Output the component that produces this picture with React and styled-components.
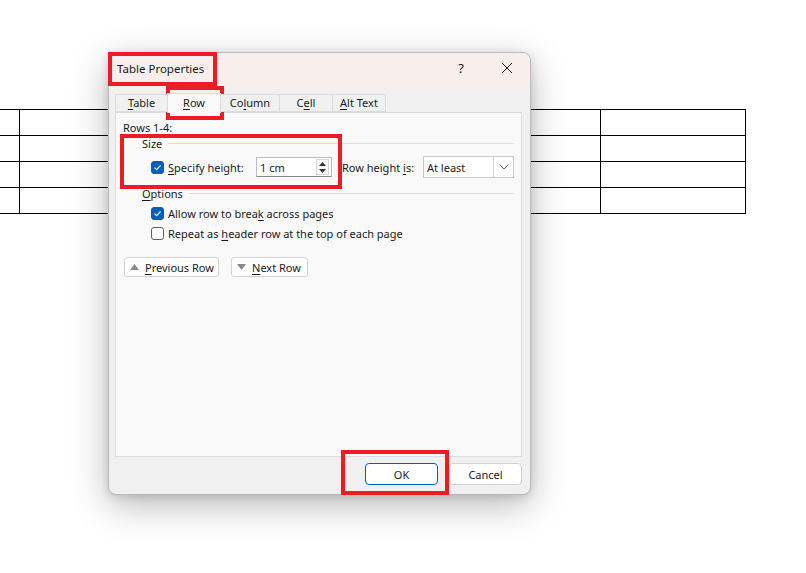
import React from 'react'
import styled, { createGlobalStyle } from 'styled-components'

const GlobalStyle = createGlobalStyle`
  html, body {
    margin: 0;
    padding: 0;
    background: #ffffff;
    overflow: hidden;
  }
  body {
    font-family: "Noto Sans", "Segoe UI", sans-serif;
    font-size: 11px;
    color: #1a1a1a;
  }
`

const Page = styled.div`
  position: relative;
  width: 806px;
  height: 573px;
  overflow: hidden;
  padding-top: 109px;
  box-sizing: border-box;
`

const DocTable = styled.table`
  border-collapse: collapse;
  margin-left: -10px;
  width: 752px;
  table-layout: fixed;
`

const DocCell = styled.td`
  border: 1px solid #000;
  height: 25px;
  padding: 0;
  width: ${p => p.$w}px;
`

const Dialog = styled.div`
  position: absolute;
  left: 108px;
  top: 52px;
  width: 423px;
  height: 443px;
  background: #f0f0f0;
  border: 1px solid #b9b9b9;
  border-radius: 8px;
  box-sizing: border-box;
  box-shadow: 0 10px 36px rgba(0, 0, 0, 0.28), 0 2px 8px rgba(0, 0, 0, 0.12);
  display: flex;
  flex-direction: column;
  overflow: hidden;
  white-space: nowrap;
`

const TitleBar = styled.div`
  height: 34px;
  box-sizing: border-box;
  padding-bottom: 4px;
  background: #f8efec;
  display: flex;
  align-items: center;
  padding-left: 8px;
  flex-shrink: 0;
`

const Title = styled.div`
  flex: 1;
  font-size: 11.5px;
  color: #1a1a1a;
`

const TitleButton = styled.div`
  width: 46px;
  height: 30px;
  display: flex;
  align-items: center;
  justify-content: center;
  font-size: 13px;
  color: #1a1a1a;
`

const Body = styled.div`
  flex: 1;
  display: flex;
  flex-direction: column;
  padding: 6px 8px 0 6px;
`

const TabStrip = styled.div`
  display: flex;
  align-items: flex-end;
  height: 19px;
  position: relative;
  z-index: 1;
`

const Tab = styled.div`
  width: ${p => p.$w}px;
  height: ${p => (p.$active ? 20 : 18)}px;
  box-sizing: border-box;
  display: flex;
  align-items: center;
  justify-content: center;
  padding-bottom: ${p => (p.$active ? '2px' : '1px')};
  border: 1px solid #dcdcdc;
  border-bottom: ${p => (p.$active ? 'none' : '1px solid #dcdcdc')};
  margin-left: -1px;
  background: ${p => (p.$active ? '#f9f9f9' : '#f0f0f0')};
  margin-bottom: ${p => (p.$active ? '-1px' : '0')};
  &:first-child {
    margin-left: 0;
  }
`

const Panel = styled.div`
  height: 345px;
  background: #f9f9f9;
  border: 1px solid #dcdcdc;
  box-sizing: border-box;
  padding: 7px 7px 0 7px;
  display: flex;
  flex-direction: column;
`

const Label = styled.div`
  height: 16px;
  line-height: 16px;
`

const GroupHeader = styled.div`
  display: flex;
  align-items: center;
  height: 16px;
  margin-top: ${p => p.$mt}px;
  margin-left: 19px;
  gap: 6px;
  &::after {
    content: '';
    flex: 1;
    height: 1px;
    background: #dddddd;
  }
`

const FieldRow = styled.div`
  display: flex;
  align-items: center;
  height: ${p => p.$h || 20}px;
  margin-top: ${p => p.$mt || 0}px;
  margin-left: 28px;
`

const Check = styled.span`
  width: 13px;
  height: 13px;
  box-sizing: border-box;
  border-radius: 3px;
  display: inline-flex;
  align-items: center;
  justify-content: center;
  background: ${p => (p.$on ? '#005fb8' : '#ffffff')};
  border: 1px solid ${p => (p.$on ? '#005fb8' : '#5f5f5f')};
  margin-right: 4px;
  flex-shrink: 0;
`

const Key = styled.u`
  text-decoration: underline;
  text-underline-offset: 2px;
`

const FieldText = styled.span`
  width: ${p => p.$w}px;
  flex-shrink: 0;
`

const SpinBox = styled.div`
  width: 76px;
  height: 20px;
  box-sizing: border-box;
  background: #ffffff;
  border: 1px solid #bdbdbd;
  border-bottom-color: #8a8a8a;
  display: flex;
  align-items: center;
  flex-shrink: 0;
`

const SpinText = styled.div`
  flex: 1;
  padding-left: 3px;
`

const SpinButtons = styled.div`
  width: 13px;
  height: 16px;
  margin-right: 2px;
  border: 1px solid #d4d4d4;
  box-sizing: border-box;
  display: flex;
  flex-direction: column;
  align-items: center;
  justify-content: space-around;
  background: #fbfbfb;
`

const SideLabel = styled.div`
  margin-left: 10px;
  width: 73px;
`

const Select = styled.div`
  width: 91px;
  height: 22px;
  box-sizing: border-box;
  margin-left: auto;
  border: 1px solid #c8c8c8;
  background: #ffffff;
  display: flex;
  align-items: center;
`

const SelectText = styled.div`
  flex: 1;
  padding-left: 3px;
`

const SelectArrow = styled.div`
  width: 19px;
  height: 20px;
  border-left: 1px solid #d4d4d4;
  display: flex;
  align-items: center;
  justify-content: center;
`

const NavRow = styled.div`
  display: flex;
  gap: 12px;
  margin-top: 14px;
  margin-left: 1px;
`

const NavButton = styled.div`
  width: ${p => p.$w}px;
  height: 20px;
  box-sizing: border-box;
  background: #ffffff;
  border: 1px solid #d3d3d3;
  border-radius: 3px;
  display: flex;
  align-items: center;
  padding-left: 5px;
  gap: 6px;
`

const Footer = styled.div`
  display: flex;
  justify-content: flex-end;
  gap: 11px;
  margin-top: 6px;
`

const Button = styled.div`
  width: 73px;
  height: 22px;
  box-sizing: border-box;
  background: #ffffff;
  border: 1px solid ${p => (p.$primary ? '#005fb8' : '#d0d0d0')};
  border-radius: 4px;
  display: flex;
  align-items: center;
  justify-content: center;
`

const Marker = styled.div`
  position: absolute;
  left: ${p => p.$x}px;
  top: ${p => p.$y}px;
  width: ${p => p.$w}px;
  height: ${p => p.$h}px;
  border: 4px solid #ec1c24;
  box-sizing: border-box;
  pointer-events: none;
`

const CheckMark = () => (
  <svg width="9" height="9" viewBox="0 0 9 9">
    <path d="M1.5 4.6 L3.6 6.6 L7.6 2.4" fill="none" stroke="#fff" strokeWidth="1.2" />
  </svg>
)

const Triangle = ({ down }) => (
  <svg width="9" height="6" viewBox="0 0 9 6">
    <path d={down ? 'M0 0 H9 L4.5 6 Z' : 'M0 6 H9 L4.5 0 Z'} fill="#8a8a8a" />
  </svg>
)

const CheckBox = ({ on }) => <Check $on={on}>{on && <CheckMark />}</Check>

const App = () => {
  const rows = [0, 1, 2, 3]
  return (
    <Page>
      <GlobalStyle />
      <DocTable>
        <tbody>
          {rows.map(r => (
            <tr key={r}>
              <DocCell $w={28} />
              <DocCell $w={580} />
              <DocCell $w={144} />
            </tr>
          ))}
        </tbody>
      </DocTable>

      <Dialog>
        <TitleBar>
          <Title>Table Properties</Title>
          <TitleButton>?</TitleButton>
          <TitleButton>
            <svg width="12" height="12" viewBox="0 0 12 12">
              <path d="M1 1 L11 11 M11 1 L1 11" stroke="#1a1a1a" strokeWidth="1" />
            </svg>
          </TitleButton>
        </TitleBar>
        <Body>
          <TabStrip>
            <Tab $w={53}><span><Key>T</Key>able</span></Tab>
            <Tab $w={54} $active><span><Key>R</Key>ow</span></Tab>
            <Tab $w={60}><span>Co<Key>l</Key>umn</span></Tab>
            <Tab $w={54}><span>C<Key>e</Key>ll</span></Tab>
            <Tab $w={54}><span><Key>A</Key>lt Text</span></Tab>
          </TabStrip>
          <Panel>
            <Label>Rows 1-4:</Label>
            <GroupHeader $mt={-1}>Size</GroupHeader>
            <FieldRow $h={22} $mt={5}>
              <CheckBox on />
              <FieldText $w={88}><Key>S</Key>pecify height:</FieldText>
              <SpinBox>
                <SpinText>1 cm</SpinText>
                <SpinButtons>
                  <svg width="7" height="4" viewBox="0 0 7 4"><path d="M0 4 H7 L3.5 0 Z" fill="#333" /></svg>
                  <svg width="7" height="4" viewBox="0 0 7 4"><path d="M0 0 H7 L3.5 4 Z" fill="#333" /></svg>
                </SpinButtons>
              </SpinBox>
              <SideLabel>Row height <Key>i</Key>s:</SideLabel>
              <Select>
                <SelectText>At least</SelectText>
                <SelectArrow>
                  <svg width="10" height="6" viewBox="0 0 10 6">
                    <path d="M0.5 0.5 L5 5 L9.5 0.5" fill="none" stroke="#606060" strokeWidth="1" />
                  </svg>
                </SelectArrow>
              </Select>
            </FieldRow>
            <GroupHeader $mt={7}><span><Key>O</Key>ptions</span></GroupHeader>
            <FieldRow $mt={2}>
              <CheckBox on />
              <span>Allow row to brea<Key>k</Key> across pages</span>
            </FieldRow>
            <FieldRow>
              <CheckBox />
              <span>Repeat as <Key>h</Key>eader row at the top of each page</span>
            </FieldRow>
            <NavRow>
              <NavButton $w={95}>
                <Triangle />
                <span><Key>P</Key>revious Row</span>
              </NavButton>
              <NavButton $w={77}>
                <Triangle down />
                <span><Key>N</Key>ext Row</span>
              </NavButton>
            </NavRow>
          </Panel>
          <Footer>
            <Button $primary>OK</Button>
            <Button>Cancel</Button>
          </Footer>
        </Body>
      </Dialog>

      <Marker $x={108} $y={52} $w={109} $h={34} />
      <Marker $x={166} $y={86} $w={58} $h={34} />
      <Marker $x={120} $y={134} $w={222} $h={55} />
      <Marker $x={341} $y={450} $w={108} $h={45} />
    </Page>
  )
}

export default App
